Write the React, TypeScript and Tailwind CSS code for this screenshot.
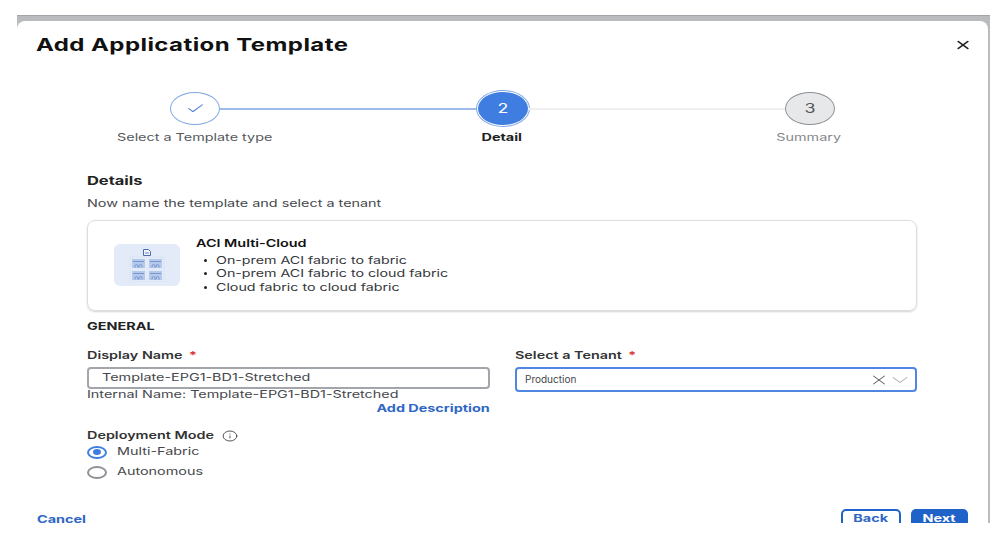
import React from "react";
import { Check, X, ChevronDown, Info } from "lucide-react";

const font = "font-['Inter','Liberation_Sans',sans-serif]";

// the screenshot is stretched sideways, so text gets the same stretch
const T = ({ children, origin = "origin-left" }: { children: React.ReactNode; origin?: string }) => (
  <span className={`inline-block whitespace-nowrap scale-x-[1.37] ${origin}`}>{children}</span>
);

const TemplateIcon = () => (
  <div className="w-[66px] h-[42px] rounded-md bg-[#e3ebf8] shrink-0 flex items-center justify-center">
    <svg width="40" height="34" viewBox="0 0 40 34" fill="none">
      <path d="M16.5 1.5h5l2 2v4h-7z" stroke="#4a6fa8" strokeWidth="1" fill="#eef3fb" />
      <path d="M18 5h4" stroke="#4a6fa8" strokeWidth="0.8" />
      <rect x="3" y="9" width="34" height="25" stroke="#c3d1e8" strokeWidth="0.6" strokeDasharray="1 1" />
      {[
        [5, 11],
        [22, 11],
        [5, 23],
        [22, 23],
      ].map(([x, y]) => (
        <g key={`${x}-${y}`}>
          <rect x={x} y={y} width="13" height="9" fill="#b4c9ec" />
          <path
            d={`M${x + 1} ${y + 2.5}h11M${x + 3} ${y + 8.5}v-2l1.5-1 1.5 1v2M${x + 7} ${y + 8.5}v-2l1.5-1 1.5 1v2`}
            stroke="#5f83bd"
            strokeWidth="0.7"
          />
        </g>
      ))}
    </svg>
  </div>
);

const App: React.FC = () => {
  return (
    <div className={`w-[999px] h-[543px] bg-white overflow-hidden pt-[15px] pl-[17px] pr-[9px] ${font}`}>
      <div className="h-[508px] bg-[#b9bbbe] border-t border-[#a2a5a9] pt-[5px] pr-[2px]">
        <div className="h-[502px] bg-white overflow-hidden flex flex-col rounded-t-lg">
          {/* Header */}
          <div className="flex items-center justify-between pl-[19px] pr-[18px] pt-[12px] h-[38px]">
            <h1 className="text-[17.5px] leading-[24px] font-bold text-[#111] tracking-[0.32px]">
              <T>Add Application Template</T>
            </h1>
            <X size={14} strokeWidth={2.2} className="text-[#222] scale-x-[1.37]" />
          </div>

          {/* Stepper circles */}
          <div className="mt-[35px] ml-[153px] flex items-center">
            <div className="w-[50px] h-[33px] shrink-0 rounded-[50%] border border-[#7fa6e3] bg-white flex items-center justify-center">
              <Check size={15} strokeWidth={1.5} className="text-[#4f7fd0] scale-x-[1.37]" />
            </div>
            <div className="w-[258px] h-[2px] bg-[#9dbce8]" />
            <div className="w-[50px] h-[33px] shrink-0 rounded-[50%] bg-[#3f7de0] ring-1 ring-offset-1 ring-[#7fa6e3] text-white text-[13px] flex items-center justify-center">
              <T origin="origin-center">2</T>
            </div>
            <div className="w-[257px] h-[2px] bg-[#eeeff1]" />
            <div className="w-[50px] h-[33px] shrink-0 rounded-[50%] border border-[#8e9195] bg-[#e7e8ea] text-[#55585c] text-[13px] flex items-center justify-center">
              <T origin="origin-center">3</T>
            </div>
          </div>
          {/* Stepper labels */}
          <div className="mt-[6px] ml-[98px] flex gap-[147px] text-[10.5px] leading-[14px]">
            <div className="w-[160px] text-center text-[#55585c]"><T origin="origin-center">Select a Template type</T></div>
            <div className="w-[160px] text-center text-[#222] font-bold"><T origin="origin-center">Detail</T></div>
            <div className="w-[160px] text-center text-[#85888c]"><T origin="origin-center">Summary</T></div>
          </div>

          {/* Body */}
          <div className="mt-[28px] pl-[70px] w-[900px]">
            <h2 className="text-[12px] leading-[16px] font-bold text-[#222]"><T>Details</T></h2>
            <p className="mt-[7px] text-[10.5px] leading-[16px] text-[#44474b]"><T>Now name the template and select a tenant</T></p>

            <div className="mt-[8px] h-[91px] rounded-lg border border-[#dcdee1] shadow-[0_1px_2px_rgba(0,0,0,0.18)] flex items-start pl-[26px] pt-[23px]">
              <TemplateIcon />
              <div className="ml-[16px] -mt-[8px]">
                <div className="text-[10.5px] leading-[16px] font-semibold text-[#111]"><T>ACI Multi-Cloud</T></div>
                <ul className="mt-[2px] pl-[8px] text-[10.4px] leading-[13.3px] text-[#33363a]">
                  {["On-prem ACI fabric to fabric", "On-prem ACI fabric to cloud fabric", "Cloud fabric to cloud fabric"].map((t) => (
                    <li key={t} className="flex items-center">
                      <span className="w-[3px] h-[3px] rounded-full bg-[#222] mr-[9px]" />
                      <T>{t}</T>
                    </li>
                  ))}
                </ul>
              </div>
            </div>

            <div className="mt-[9px] text-[10.5px] leading-[14px] font-bold text-[#222]"><T>GENERAL</T></div>

            <div className="mt-[15px] grid grid-cols-[403px_402px] gap-x-[25px] items-start">
              <div>
                <label className="block text-[10.5px] leading-[14px] font-semibold text-[#333]">
                  <T>Display Name <span className="text-[#d6322c] ml-[2px]">*</span></T>
                </label>
                <div className="mt-[4px] h-[22px] rounded-[4px] border-2 border-[#a2a5aa] flex items-center pl-[13px] text-[10.5px] text-[#44474b]">
                  <T>Template-EPG1-BD1-Stretched</T>
                </div>
                <div className="mt-[-1px] text-[10.5px] leading-[14px] text-[#44474b]"><T>Internal Name: Template-EPG1-BD1-Stretched</T></div>
                <div className="text-right text-[10.5px] leading-[14px] font-bold text-[#2f67c4]"><T origin="origin-right">Add Description</T></div>
              </div>
              <div>
                <label className="block text-[10.5px] leading-[14px] font-semibold text-[#333]">
                  <T>Select a Tenant <span className="text-[#d6322c] ml-[2px]">*</span></T>
                </label>
                <div className="mt-[4px] h-[25px] rounded-[4px] border-2 border-[#4f86e2] flex items-center pl-[8px] pr-[5px] text-[10px] text-[#44474b]">
                  <span className="flex-1">Production</span>
                  <X size={16} strokeWidth={1.1} className="text-[#55585c] scale-x-[1.37]" />
                  <ChevronDown size={20} strokeWidth={0.9} className="ml-[3px] text-[#a6a9ad] scale-x-[1.37]" />
                </div>
              </div>
            </div>

            <div className="mt-[13px] flex items-center text-[10.5px] leading-[14px] font-semibold text-[#333]">
              <T>Deployment Mode</T>
              <Info size={12} strokeWidth={1.4} className="ml-[44px] text-[#333] scale-x-[1.37]" />
            </div>
            <div className="-mt-[1px] flex items-center h-[20px] text-[10.5px] text-[#44474b]">
              <span className="w-[20px] h-[13px] rounded-[50%] border-2 border-[#3f7de0] flex items-center justify-center mr-[10px]">
                <span className="w-[8px] h-[6px] rounded-[50%] bg-[#3f7de0]" />
              </span>
              <T>Multi-Fabric</T>
            </div>
            <div className="flex items-center h-[20px] text-[10.5px] text-[#44474b]">
              <span className="w-[20px] h-[13px] rounded-[50%] border-2 border-[#8e9195] mr-[10px]" />
              <T>Autonomous</T>
            </div>
          </div>

          {/* Footer */}
          <div className="mt-[27px] flex items-start justify-between pl-[20px] pr-[20px] text-[10.5px] leading-[14px] font-bold">
            <span className="mt-[4px] text-[#2f67c4]"><T>Cancel</T></span>
            <div className="flex gap-[10px]">
              <button className="w-[60px] h-[30px] rounded-[5px] border-2 border-[#1f63c8] pt-[1px] flex justify-center text-[#2f67c4]"><T origin="origin-center">Back</T></button>
              <button className="w-[57px] h-[30px] rounded-[5px] bg-[#1f63c8] pt-[3px] flex justify-center text-white"><T origin="origin-center">Next</T></button>
            </div>
          </div>
        </div>
      </div>
    </div>
  );
};

export default App;
